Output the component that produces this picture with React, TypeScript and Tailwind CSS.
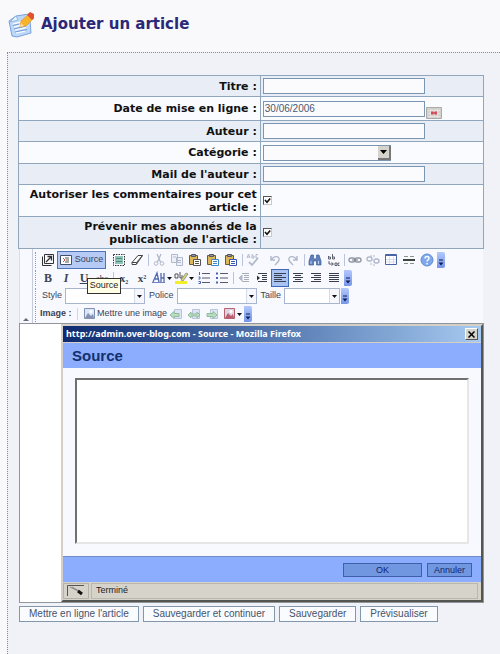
import React from "react";

type Kids = { children?: React.ReactNode };

const rowLine = "border border-[#8fa6bd]";
const field = "h-4 w-[162px] border border-[#7b96b2] bg-[#fbfbfe] px-px text-[10px] leading-3 text-[#4c586a] outline-none";

function Row({ label, id, alt, height, children }: Kids & { label: string; id: string; alt?: boolean; height: string }) {
  return (
    <tr className={`${height} ${alt ? "bg-[#e9eef6]" : "bg-[#fafbff]"}`}>
      <th scope="row" className={`${rowLine} w-[52%] py-0 pr-[3px] text-right align-middle font-bold`}>
        <label htmlFor={id} className="block leading-[13px]">{label}</label>
      </th>
      <td className={`${rowLine} py-0 pl-[2px] align-middle`}>
        <div className="flex items-center">{children}</div>
      </td>
    </tr>
  );
}

function Check({ id }: { id: string }) {
  return (
    <span className="relative flex">
      <input id={id} type="checkbox" defaultChecked className="peer size-[9px] appearance-none border border-t-[#555] border-r-[#c9c9c9] border-b-[#c9c9c9] border-l-[#555] bg-white" />
      <svg viewBox="0 0 9 9" className="pointer-events-none absolute inset-0 hidden size-[9px] peer-checked:block">
        <path d="M2 4 L4 6.2 L7.2 2.4" fill="none" stroke="#111" strokeWidth="1.6" />
      </svg>
    </span>
  );
}

function Tool({ label, faded, active, wide, children }: Kids & { label: string; faded?: boolean; active?: boolean; wide?: boolean }) {
  return (
    <button
      type="button"
      aria-label={label}
      className={`flex h-[18px] shrink-0 items-center justify-center ${wide ? "w-[22px]" : "w-[18px]"} ${active ? "border border-[#3f68b5] bg-[#a9c3f3]" : ""} ${faded ? "opacity-40" : ""}`}
    >
      <svg viewBox={wide ? "0 0 20 14" : "0 0 14 14"} className={`${wide ? "w-5" : "w-[14px]"} h-[14px] shrink-0`} fill="none" stroke="#4a5a80" strokeWidth="1">
        {children}
      </svg>
    </button>
  );
}

function Sep({ line = true }: { line?: boolean }) {
  return (
    <span className="flex w-1 shrink-0 justify-center">
      {line && <span className="h-3 w-px bg-[#b9c4dc]" />}
    </span>
  );
}

function More() {
  return (
    <button type="button" aria-label="Plus d'options" className="ml-px flex h-4 w-2 shrink-0 items-end justify-center rounded-r-xs bg-linear-to-b from-[#b3c8fb] to-[#7495ea] pb-[2px]">
      <svg viewBox="0 0 6 7" className="h-[7px] w-[6px]"><path d="M1 1h4" stroke="#101c50" /><path d="M0.5 3.5h5L3 6.5z" fill="#101c50" /></svg>
    </button>
  );
}

function Bar({ children }: Kids) {
  return (
    <div className="flex h-[18px] items-center pl-[2px]">
      <span className="mr-[3px] h-4 w-px border-l border-dotted border-[#8c9cc0]" />
      {children}
    </div>
  );
}

function Pick({ label, id, width, gap }: { label: string; id: string; width: string; gap: string }) {
  return (
    <span className={`flex items-center ${gap}`}>
      <label htmlFor={id} className="mr-[3px]">{label}</label>
      <span className={`relative flex ${width}`}>
        <select id={id} className="h-4 w-full appearance-none border border-[#a9b5cf] bg-white"><option></option></select>
        <span className="pointer-events-none absolute inset-y-px right-px flex w-[10px] items-center justify-center border-l border-[#d5dbea] bg-[#f6f7fd]">
          <svg viewBox="0 0 5 3" className="h-[3px] w-[5px]"><path d="M0 0h5L2.5 3z" fill="#111" /></svg>
        </span>
      </span>
    </span>
  );
}

function Paste({ accent }: { accent: string }) {
  return (
    <>
      <path d="M1.5 2.5h8v9h-8z" fill="#dcb65a" stroke="#6b5a34" />
      <path d="M3.5 1.5h4v2h-4z" fill="#8d97ab" stroke="#4d566c" />
      <path d="M5.5 6.5h7v6h-7z" fill="#fff" stroke={accent} />
      <path d="M7 8.5h4M7 10.5h4" stroke={accent} />
    </>
  );
}

function Photo({ color, fill }: { color: string; fill: string }) {
  return (
    <>
      <path d="M2.5 1.5h10v10h-10z" fill={fill} stroke={color} />
      <circle cx="9" cy="4.5" r="1.5" fill="#fff" stroke="none" />
      <path d="M3 11l3-5 3 3 2-2 1 4z" fill={color} stroke="none" />
    </>
  );
}

function Arrow({ both, right }: { both?: boolean; right?: boolean }) {
  return (
    <>
      <path d="M5.5 2.5h7v9h-7z" fill="#dde5f5" stroke="#b9c5dc" />
      {right ? (
        <path d="M2 6.5h6v-2l4 3.5-4 3.5v-2H2z" fill="#bcdcc2" stroke="#8fbd9b" />
      ) : (
        <path d={both ? "M1 8l3-3v2h6V5l3 3-3 3V9H4v2z" : "M1 8l4-3.5v2h5v3H5v2z"} fill="#bcdcc2" stroke="#8fbd9b" />
      )}
    </>
  );
}

const lines = (rows: [number, number][], y0 = 2) =>
  rows.map(([a, b], i) => <path key={i} d={`M${a} ${y0 + i * 2}.5H${b}`} stroke="#3a3f4e" />);

const caret = <path d="M15 6h5l-2.5 3z" fill="#111" stroke="none" />;

const glyph = "font-['Liberation_Serif',serif] font-bold";

export default function App() {
  return (
    <main className="flex min-h-screen flex-col overflow-hidden bg-[#f9f9fb] pl-[7px] font-['Liberation_Sans',sans-serif] text-[9px] text-[#3c4356]">
      <header className="flex h-[52px] items-center pb-1">
        <svg viewBox="0 0 28 28" className="size-7">
          <path d="M2 11l7-5 13-2 1 6 1 13-14 4-5-1z" fill="#bcd7f8" stroke="#7aa2dc" />
          <path d="M3 12l6-6 2 4z" fill="#eef6ff" stroke="#7aa2dc" strokeWidth=".7" />
          <path d="M6 14l12-3M7 17l12-3M8 20l11-2.500M9 23l9-2" stroke="#f4faff" strokeWidth="1.4" />
          <path d="M6 15.5l6-1.500M7 19l12-3M8 22l12-2.500" stroke="#6c92cd" strokeWidth=".9" />
          <path d="M13 17l1-6 8-7 5 4-8 8z" fill="#f9b32a" stroke="#e09428" strokeWidth=".7" />
          <path d="M20 5l3-3 4 2v4l-2 2z" fill="#e4502e" />
          <path d="M13 17l1-4 3 3z" fill="#fbe2a8" />
        </svg>
        <h1 className="ml-[6px] font-['DejaVu_Sans',Verdana,sans-serif] text-[15px] leading-5 font-bold text-[#2a2877]">Ajouter un article</h1>
      </header>

      <section className="flex-1 border-t border-l border-dotted border-[#8b8b8b] bg-[#f1f1f8] pt-[22px] pr-4 pb-8 pl-[10px]">
        <form onSubmit={(e) => e.preventDefault()}>
          <table className="w-full table-fixed border-collapse font-['DejaVu_Sans',Verdana,sans-serif] text-[11px] text-[#111]">
            <tbody>
              <Row label="Titre :" id="titre" alt height="h-[21px]"><input id="titre" className={field} /></Row>
              <Row label="Date de mise en ligne :" id="date" height="h-[24px]">
                <input id="date" defaultValue="30/06/2006" className={`${field} font-['Liberation_Sans',sans-serif]`} />
                <button type="button" aria-label="Calendrier" className="mt-2 ml-px flex">
                  <svg viewBox="0 0 16 12" className="h-3 w-4">
                    <path d="M.5.5h15v11H.5z" fill="#d4d1cb" stroke="#aaa" />
                    <path d="M2 3.5h12M2 6.5h12M2 9.5h12M4.5 2v9M11.5 2v9" stroke="#e6e3e0" />
                    <path d="M5 4.5h2l1 1 1-1h2v3H9l-1-1-1 1H5z" fill="#d34b5b" />
                  </svg>
                </button>
              </Row>
              <Row label="Auteur :" id="auteur" alt height="h-[21px]"><input id="auteur" className={field} /></Row>
              <Row label="Catégorie :" id="categorie" height="h-[22px]">
                <span className="relative flex w-32">
                  <select id="categorie" className="h-4 w-full appearance-none border border-[#7b96b2] bg-[#fbfbfe]"><option></option></select>
                  <span className="pointer-events-none absolute inset-y-px right-0 flex w-[13px] items-center justify-center border-r-2 border-b-2 border-[#777] bg-[#d6d3cc]">
                    <svg viewBox="0 0 7 4" className="h-1 w-[7px]"><path d="M0 0h7L3.5 4z" fill="#000" /></svg>
                  </span>
                </span>
              </Row>
              <Row label="Mail de l'auteur :" id="mail" alt height="h-[21px]"><input id="mail" type="email" className={field} /></Row>
              <Row label="Autoriser les commentaires pour cet article :" id="comments" height="h-[32px]"><Check id="comments" /></Row>
              <Row label="Prévenir mes abonnés de la publication de l'article :" id="notify" alt height="h-[32px]"><Check id="notify" /></Row>
            </tbody>
          </table>

          <div className="relative mr-px ml-px flex border-l border-[#dadce8] bg-[#f8f9fe]">
            <div className="flex w-[13px] items-end justify-center border-r border-[#c6cbdb] pb-[2px]">
              <svg viewBox="0 0 6 3" className="h-[3px] w-[6px]"><path d="M0 3h6L3 0z" fill="#666b78" /></svg>
            </div>
            <div className="flex-1 pt-[2px]">
              <Bar>
                <Tool label="Agrandir">
                  <path d="M3.5 1.5h9v9h-9zM1.5 3.5v9h9" stroke="#333" /><path d="M5 9l5-5M6.5 3.5h4v4" stroke="#333" strokeWidth="1.3" />
                </Tool>
                <button type="button" className="flex h-[18px] w-[49px] items-center justify-center gap-[3px] border border-[#4f74b8] bg-[#b5cbf5]">
                  <svg viewBox="0 0 12 12" className="size-3"><path d="M.5 1.5h11v9H.5z" fill="#fff" stroke="#444f68" /><path d="M3 4l2 2-2 2" fill="none" stroke="#c05030" /><path d="M5 4h4M6 6h3M5 8h4" stroke="#555" /></svg>
                  Source
                </button>
                <Sep line={false} />
                <Tool label="Tout sélectionner">
                  <path d="M3 3h8v8H3z" fill="#8fc4b4" stroke="none" /><path d="M1.5 1.5h11v11h-11z" stroke="#333" strokeDasharray="1.5 1" /><path d="M4 5.5h6M4 8.5h6" stroke="#4d8a83" />
                </Tool>
                <Tool label="Supprimer la mise en forme"><path d="M2 9.500L8 2.500h4.500L7 10.500 6 11.500H2z" fill="#fff" stroke="#444" /><path d="M2 9.500h4.500l6-7M6.500 9.500v2" stroke="#444" /></Tool>
                <Sep />
                <Tool label="Couper" faded><path d="M5 1l3.500 8M9 1L5.500 9" strokeWidth="1.3" /><circle cx="4" cy="10.5" r="1.8" /><circle cx="10" cy="10.5" r="1.8" /></Tool>
                <Tool label="Copier" faded><path d="M1.5 1.5h6v8h-6zM6.5 4.5h6v8h-6z" fill="#dfe6f6" /><path d="M3 4h3M8 7.5h3M8 9.5h3" /></Tool>
                <Tool label="Coller"><Paste accent="#555" /></Tool>
                <Tool label="Coller comme texte"><Paste accent="#3f86c8" /></Tool>
                <Tool label="Coller de Word"><Paste accent="#3a58b0" /></Tool>
                <Sep />
                <Tool label="Orthographe" faded><path d="M1 5l1.500-4L4 5M1.500 4h2M6 1v4h2V3H6M12 1.500h-2V5h2" /><path d="M3 9l3 3 6-7" strokeWidth="1.8" /></Tool>
                <Sep line={false} />
                <Tool label="Annuler l'action" faded><path d="M3 3v4h4M3 7c3-5 9-4 8 0-.5 2-2 3-4 5" strokeWidth="1.4" /></Tool>
                <Tool label="Rétablir" faded><path d="M11 3v4H7M11 7C8 2 2 3 3 7c.5 2 2 3 4 5" strokeWidth="1.4" /></Tool>
                <Sep />
                <Tool label="Rechercher"><path d="M3 2h2.500v3l1 1h1l1-1V2H11l2 6v4H8.500V8h-3v4H1V8z" fill="#5f80bb" stroke="#40609c" strokeWidth=".7" /><path d="M3 8v3M10.500 8v3" stroke="#bdd0f2" /></Tool>
                <Tool label="Remplacer">
                  <path d="M2.500 3v3M2.500 6h2V4h-2M6.500 1v5h2V4h-2M3 8v3h4M5.500 9.500L7.500 11l-2 1.500M9 10h2v2.500H9zM13.500 10H12v2.500h1.500" stroke="#5c6070" />
                </Tool>
                <Sep />
                <Tool label="Lien"><rect x="1" y="5" width="6" height="4" rx="2" stroke="#9097a6" strokeWidth="1.4" /><rect x="7" y="5" width="6" height="4" rx="2" stroke="#9097a6" strokeWidth="1.4" /><path d="M4 7h6" stroke="#777" /></Tool>
                <Tool label="Supprimer le lien" faded><rect x="1" y="4" width="5" height="4" rx="2" strokeWidth="1.4" /><rect x="8" y="6" width="5" height="4" rx="2" strokeWidth="1.4" /><path d="M5 2v2M8 2v2M5 10v2M8 11v2" /></Tool>
                <Tool label="Tableau"><path d="M1.5 1.5h11v10h-11z" fill="#fff" stroke="#4b64a4" /><path d="M1 2.5h12" stroke="#4b64a4" /><path d="M5.5 4v7M9.5 4v7M2 6.5h10M2 9h10" stroke="#d3dbec" /></Tool>
                <Tool label="Ligne horizontale"><path d="M1 7h12" stroke="#3d463e" strokeWidth="2" /><path d="M2 3.500h4M8 3.500h4M2 10.500h4M8 10.500h4" stroke="#8b948c" /></Tool>
                <Tool label="Aide">
                  <circle cx="7" cy="7" r="6" fill="#7fa8ec" stroke="#5f8bd8" />
                  <path d="M5 5.500c0-3 4.500-2.500 4 0-.2 1.200-2 1.500-2 3M7 10v1.500" stroke="#fff" strokeWidth="1.5" />
                </Tool>
                <More />
              </Bar>

              <Bar>
                {[["Gras", "B", ""], ["Italique", "I", "italic"], ["Souligné", "U", "underline"]].map(([l, t, c]) => (
                  <button key={l} type="button" aria-label={l} className={`h-[18px] w-[18px] text-[12px] leading-[18px] ${glyph} ${c}`}>{t}</button>
                ))}
                <button type="button" aria-label="Barré" className="h-[18px] w-[18px] font-['Liberation_Serif',serif] text-[9px] leading-[18px] line-through">abc</button>
                <Sep />
                <button type="button" aria-label="Indice" className={`h-[18px] w-[18px] text-[11px] leading-[18px] ${glyph}`}>x<sub className="text-[6px]">2</sub></button>
                <button type="button" aria-label="Exposant" className={`h-[18px] w-[18px] text-[11px] leading-[18px] ${glyph}`}>x<sup className="text-[6px]">2</sup></button>
                <Tool label="Couleur du texte" wide>
                  <path d="M1 11L5 2l2 9M3 8h4M9 2v9M12 2v9M9 7h3" stroke="#5269b0" strokeWidth="1.3" /><path d="M0 11.5h13" stroke="#7480c4" />{caret}
                </Tool>
                <Tool label="Surlignage" wide>
                  <path d="M1 3h3v4H1zM6 1v6h2V4" stroke="#555" /><path d="M7 9l5-7 2 1-5 7z" fill="#d8d87a" stroke="#777" strokeWidth=".7" /><path d="M1 10h12v3H1z" fill="#f4ee28" stroke="none" />{caret}
                </Tool>
                <Tool label="Liste numérotée"><path d="M5 2.500h8M5 7h8M5 11.500h8" stroke="#555b6c" /><path d="M2.500 1v3M1.500 6h1.500v2H1.500M1.500 10.500h2v2h-2" stroke="#4564b4" /></Tool>
                <Tool label="Liste à puces"><path d="M5 2.500h8M5 7h8M5 11.500h8" stroke="#555b6c" /><path d="M1 2.500h2M1 7h2M1 11.500h2" stroke="#4564b4" strokeWidth="2" /></Tool>
                <Sep />
                <Tool label="Diminuer le retrait" faded>{lines([[5, 12], [7, 12], [7, 12], [7, 12], [5, 12]])}<path d="M5 4L2 7l3 3z" fill="#4a5a80" /></Tool>
                <Tool label="Augmenter le retrait">{lines([[3, 12], [7, 12], [7, 12], [7, 12], [3, 12]])}<path d="M2 4.500L5 7 2 9.500z" fill="#333" stroke="none" /></Tool>
                <Tool label="Aligner à gauche" active>{lines([[1, 13], [1, 9], [1, 13], [1, 9], [1, 13]])}</Tool>
                <Tool label="Centrer">{lines([[2, 12], [4, 10], [2, 12], [4, 10], [2, 12]])}</Tool>
                <Tool label="Aligner à droite">{lines([[2, 12], [5, 12], [2, 12], [5, 12], [2, 12]])}</Tool>
                <Tool label="Justifier">{lines([[2, 12], [2, 12], [2, 12], [2, 12], [2, 12]])}</Tool>
                <More />
              </Bar>

              <Bar>
                <Pick label="Style" id="style" width="w-20" gap="ml-[3px]" />
                <Pick label="Police" id="police" width="w-20" gap="ml-1" />
                <Pick label="Taille" id="taille" width="w-14" gap="ml-1" />
                <More />
              </Bar>

              <Bar>
                <span className="ml-px w-[37px] font-bold whitespace-nowrap">Image :</span>
                <span className="h-3 w-px bg-[#d0d6e6]" />
                <button type="button" className="ml-1 flex h-[18px] items-center gap-px whitespace-nowrap">
                  <svg viewBox="0 0 14 14" className="size-[14px]"><Photo color="#8292b0" fill="#dbe6f7" /></svg>
                  Mettre une image
                </button>
                <Tool label="Image à gauche"><Arrow /></Tool>
                <Tool label="Image au centre"><Arrow both /></Tool>
                <Tool label="Image à droite"><Arrow right /></Tool>
                <Tool label="Bordure de l'image" wide><Photo color="#b8606f" fill="#dcd5e4" />{caret}</Tool>
                <More />
              </Bar>
            </div>

            <span role="tooltip" className="absolute top-[29px] left-[67px] flex h-4 w-[34px] items-center justify-center border border-[#333] bg-[#ffffe6] text-[#222]">Source</span>
          </div>

          <div className="ml-px border border-[#90949d] bg-white pl-[41px]">
            <div role="dialog" aria-labelledby="dialog-title" className="border-2 border-t-[#d4d0c8] border-r-[#55554f] border-b-[#55554f] border-l-[#d4d0c8] bg-[#f8f9fe]">
              <div className="flex h-4 items-center justify-between bg-linear-to-r from-[#0e2a70] to-[#a6caf0] px-[3px]">
                <span className="font-['Noto_Sans','Liberation_Sans',sans-serif] text-[9px] font-bold whitespace-nowrap text-white">http://admin.over-blog.com - Source - Mozilla Firefox</span>
                <button type="button" aria-label="Fermer" className="flex h-3 w-[13px] items-center justify-center border border-t-white border-r-[#555] border-b-[#555] border-l-white bg-[#d6d3cb]">
                  <svg viewBox="0 0 7 7" className="size-[7px]"><path d="M.5.5l6 6M6.5.5l-6 6" stroke="#000" strokeWidth="1.5" /></svg>
                </button>
              </div>
              <h2 id="dialog-title" className="h-[26px] border-t border-[#d4d0c8] bg-[#8cadfd] pl-[9px] text-[15px] leading-[26px] font-bold text-[#12306e]">Source</h2>
              <div className="flex px-3 pt-[10px] pb-3">
                <textarea aria-label="Source" className="h-[166px] w-full resize-none border-2 border-t-[#707070] border-r-[#e6e6e6] border-b-[#e6e6e6] border-l-[#707070] bg-white outline-none" />
              </div>
              <div className="flex h-[26px] items-center justify-end gap-[5px] border-t border-[#6f8cc8] bg-[#8cadfd] pr-[9px] text-[#12246c]">
                <button type="button" className="h-[14px] w-[79px] border border-[#3f60a8] bg-[#7197e0] leading-3">OK</button>
                <button type="button" className="h-[14px] w-[45px] border border-[#3f60a8] bg-[#7197e0] leading-3">Annuler</button>
              </div>
              <div className="flex h-[18px] items-center bg-[#d6d3cb] py-px pr-[3px] text-[#222]">
                <span className="flex h-full w-[26px] items-center justify-center border border-[#b4b1a9]">
                  <svg viewBox="0 0 18 12" className="h-3 w-[18px]"><path d="M.5 11V.5H17" fill="none" stroke="#555" /><path d="M3 2l8 4M5 2l7 4" stroke="#888" /><path d="M11 6l4 3" stroke="#111" strokeWidth="3" /></svg>
                </span>
                <span className="ml-[2px] flex h-full flex-1 items-center border border-[#bab7af] pl-1">Terminé</span>
              </div>
            </div>
          </div>

          <div className="mt-[3px] ml-px flex flex-wrap gap-1 text-[10px] text-[#46536a]">
            {["Mettre en ligne l'article", "Sauvegarder et continuer", "Sauvegarder", "Prévisualiser"].map((t) => (
              <button key={t} type="button" className="h-4 border border-[#8296ac] bg-[#fafbfe] px-[9px] leading-[14px] whitespace-nowrap">{t}</button>
            ))}
          </div>
        </form>
      </section>
    </main>
  );
}
